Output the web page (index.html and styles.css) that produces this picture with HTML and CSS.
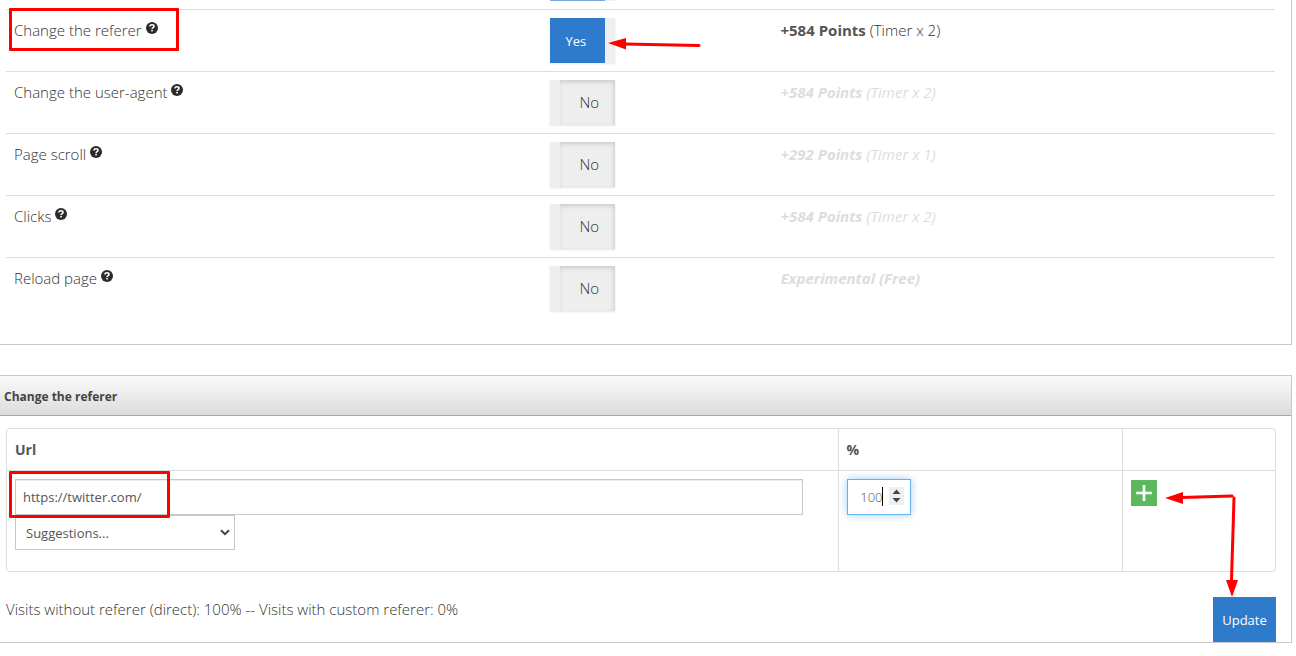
FILE: index.html
```
<!DOCTYPE html>
<html lang="en">
<head>
    <meta charset="UTF-8">
    <meta name="viewport" content="width=device-width, initial-scale=1.0">
    <title>Change the referer</title>
    <link rel="stylesheet" href="styles.css">
</head>
<body>
    <svg class="defs" aria-hidden="true">
        <symbol id="help" viewBox="0 0 12 12">
            <circle cx="6" cy="6" r="6" fill="#2b2b2b"/>
            <path d="M4 4.600C4 3.300 4.900 2.800 6 2.800s2 .6 2 1.600C8 5.700 6.100 5.600 6.100 7" fill="none" stroke="#fff" stroke-width="1.600"/>
            <rect x="5.200" y="7.900" width="1.700" height="1.500" fill="#fff"/>
        </symbol>
    </svg>

    <!-- Options -->
    <section class="panel options-panel">
        <table class="options">
            <tr class="cut">
                <td class="col-name"></td>
                <td class="col-switch"><div class="cut-toggle"></div></td>
                <td class="col-points"></td>
            </tr>
            <tr>
                <td><label for="referer">Change the referer</label> <svg class="help"><use href="#help"/></svg><span class="mark mark-option"></span></td>
                <td>
                    <label class="toggle on"><input type="checkbox" id="referer" checked><span>Yes</span></label>
                    <svg class="arrow arrow-yes" viewBox="0 0 94 16"><path d="M16 8L91 9.500" stroke="#f00" stroke-width="3" stroke-linecap="round"/><path d="M0 7L18 2V13.500Z" fill="#f00"/></svg>
                </td>
                <td><b>+584 Points</b> (Timer x 2)</td>
            </tr>
            <tr>
                <td><label for="agent">Change the user-agent</label> <svg class="help"><use href="#help"/></svg></td>
                <td><label class="toggle"><input type="checkbox" id="agent"><span>No</span></label></td>
                <td class="off"><b>+584 Points</b> (Timer x 2)</td>
            </tr>
            <tr>
                <td><label for="scroll">Page scroll</label> <svg class="help"><use href="#help"/></svg></td>
                <td><label class="toggle"><input type="checkbox" id="scroll"><span>No</span></label></td>
                <td class="off"><b>+292 Points</b> (Timer x 1)</td>
            </tr>
            <tr>
                <td><label for="clicks">Clicks</label> <svg class="help"><use href="#help"/></svg></td>
                <td><label class="toggle"><input type="checkbox" id="clicks"><span>No</span></label></td>
                <td class="off"><b>+584 Points</b> (Timer x 2)</td>
            </tr>
            <tr>
                <td><label for="reload">Reload page</label> <svg class="help"><use href="#help"/></svg></td>
                <td><label class="toggle"><input type="checkbox" id="reload"><span>No</span></label></td>
                <td class="off"><b>Experimental (Free)</b></td>
            </tr>
        </table>
    </section>

    <!-- Referer -->
    <section class="panel referer-panel">
        <h2>Change the referer</h2>
        <form class="referer-form">
            <table class="urls">
                <tr>
                    <th class="col-url">Url</th>
                    <th class="col-percent">%</th>
                    <th></th>
                </tr>
                <tr class="url-row">
                    <td>
                        <input type="text" class="url" aria-label="Url" value="https://twitter.com/">
                        <select aria-label="Suggestions"><option>Suggestions...</option></select>
                        <svg class="chevron" viewBox="0 0 10 7"><path d="M1 1.200L5 5.200L9 1.200" fill="none" stroke="#444" stroke-width="2"/></svg>
                        <span class="mark mark-url"></span>
                    </td>
                    <td>
                        <div class="percent">
                            <input type="number" aria-label="Percent" value="100">
                            <span class="caret"></span>
                            <svg class="spin" viewBox="0 0 15 18"><rect width="15" height="18" fill="#efefef"/><path d="M3.500 7L7.500 2.500L11.500 7ZM3.500 11L7.500 15.500L11.500 11Z" fill="#444"/></svg>
                        </div>
                    </td>
                    <td>
                        <button type="button" class="add" aria-label="Add"><svg viewBox="0 0 26 26"><path d="M13 5V21M5 13H21" stroke="#fff" stroke-width="2.600"/></svg></button>
                    </td>
                </tr>
            </table>
            <div class="footer">
                <p>Visits without referer (direct): 100% -- Visits with custom referer: 0%</p>
                <button type="submit" class="update">Update</button>
            </div>
            <svg class="arrow arrow-update" viewBox="0 0 76 110"><path d="M17 11.500L67 10M69 12L66.500 94" fill="none" stroke="#f00" stroke-width="3" stroke-linecap="round"/><path d="M0 12L18 6V18ZM61 94H73L67 111Z" fill="#f00"/></svg>
        </form>
    </section>
</body>
</html>
```

FILE: styles.css
```
* {
    box-sizing: border-box;
}
body {
    margin: 0 4px 0 0;
    background-color: #fff;
    color: #333;
    font-family: "Open Sans", "Noto Sans", sans-serif;
    font-size: 15px;
    font-weight: 300;
    line-height: 24px;
}
input, select, button {
    font-family: inherit;
    color: #555;
}
b {
    font-weight: 700;
}
.defs {
    display: none;
}
.panel {
    border: 1px solid #c8c8c8;
    border-left: none;
}
.options-panel {
    border-top: none;
    padding: 0 16px 25px 6px;
    margin-bottom: 30px;
}
table {
    width: 100%;
    table-layout: fixed;
    border-spacing: 0;
}
td, th {
    padding: 8px;
    text-align: left;
    vertical-align: top;
}
.options td {
    position: relative;
    height: 62px;
    border-top: 1px solid #ddd;
}
.options .cut td {
    height: 9px;
    padding: 0 8px 8px;
    border-top: none;
}
.cut-toggle {
    width: 65px;
    height: 1px;
    background: linear-gradient(to right, #7ba7dd 55px, #eee 55px);
}
.col-name {
    width: 42.2%;
}
.col-switch {
    width: 18.2%;
}
.options .off {
    color: #ddd;
    font-style: italic;
    font-weight: 400;
}
td b {
    color: #555;
}
.off b {
    color: inherit;
}
.help {
    width: 12px;
    height: 12px;
    vertical-align: 2px;
}
.toggle {
    display: flex;
    width: 65px;
    height: 45px;
    padding-left: 10px;
    background-color: #eee;
    box-shadow: 0 1px 2px rgba(0, 0, 0, 0.1);
    line-height: 45px;
}
.toggle input {
    position: absolute;
    opacity: 0;
}
.toggle span {
    width: 55px;
    padding-left: 20px;
    box-shadow: inset -1px 2px 4px rgba(0, 0, 0, 0.15);
}
.toggle.on {
    padding: 0 10px 0 0;
    line-height: 46px;
}
.toggle.on span {
    padding-left: 16px;
    background-color: #2f7bcb;
    color: #fff;
    font-size: 13px;
    font-weight: 400;
    box-shadow: none;
}
/* red notes */
.mark {
    position: absolute;
    border: 3px solid #f00;
    border-radius: 1px;
}
.mark-option {
    top: -2px;
    left: 3px;
    width: 170px;
    height: 43px;
}
.mark-url {
    top: 0;
    left: 2px;
    width: 161px;
    height: 47px;
}
.arrow {
    position: absolute;
    fill: none;
}
.arrow-yes {
    top: 26px;
    left: 66px;
    width: 94px;
    height: 16px;
}
.arrow-update {
    right: 50px;
    bottom: 46px;
    width: 76px;
    height: 110px;
    overflow: visible;
}
h2 {
    height: 40px;
    margin: 0;
    padding-left: 4px;
    border-bottom: 1px solid #aaa;
    background: linear-gradient(#fafafa, #dcdcdc);
    color: #444;
    font-size: 12px;
    line-height: 41px;
}
.referer-form {
    position: relative;
    padding: 12px 15px 0 6px;
}
.urls {
    border: 1px solid #ddd;
    border-radius: 4px;
}
.urls th + th, .urls td + td {
    border-left: 1px solid #ddd;
}
.urls th {
    height: 41px;
    color: #555;
    font-size: 14px;
    line-height: 25px;
}
.urls td {
    position: relative;
    height: 101px;
    border-top: 1px solid #ddd;
}
.col-url {
    width: 65.5%;
}
.col-percent {
    width: 22.4%;
}
.url, select, .percent input {
    display: block;
    height: 36px;
    border: 1px solid #c8c8c8;
    border-radius: 0;
    background-color: #fff;
    outline: none;
    font-size: 13px;
}
.url {
    width: calc(100% - 27px);
    padding: 0 7px;
    box-shadow: inset 0 1px 1px rgba(0, 0, 0, 0.08);
}
select {
    width: 220px;
    padding: 0 10px;
    appearance: none;
    height: 35px;
}
.chevron {
    position: absolute;
    top: 58px;
    left: 213px;
    width: 10px;
    height: 7px;
}
.percent {
    position: relative;
    width: 64px;
}
.percent input {
    width: 64px;
    padding: 0 27px 0 8px;
    border-color: #66afe9;
    box-shadow: 0 0 8px rgba(102, 175, 233, 0.6);
    text-align: right;
    font-weight: 300;
    appearance: textfield;
}
.percent input::-webkit-inner-spin-button {
    display: none;
}
.caret {
    position: absolute;
    top: 8px;
    left: 35px;
    width: 1px;
    height: 19px;
    background-color: #000;
}
.spin {
    position: absolute;
    top: 8px;
    left: 42px;
    width: 15px;
    height: 18px;
}
.add {
    display: block;
    width: 26px;
    height: 26px;
    margin-top: 1px;
    padding: 0;
    border: none;
    background-color: #5cb85c;
}
.add svg {
    display: block;
}
.footer {
    display: flex;
    justify-content: space-between;
    padding-top: 25px;
}
.footer p {
    margin: 0;
}
.update {
    width: 63px;
    height: 45px;
    padding: 0;
    border: none;
    background-color: #2f7bcb;
    color: #fff;
    font-size: 13px;
}
```
